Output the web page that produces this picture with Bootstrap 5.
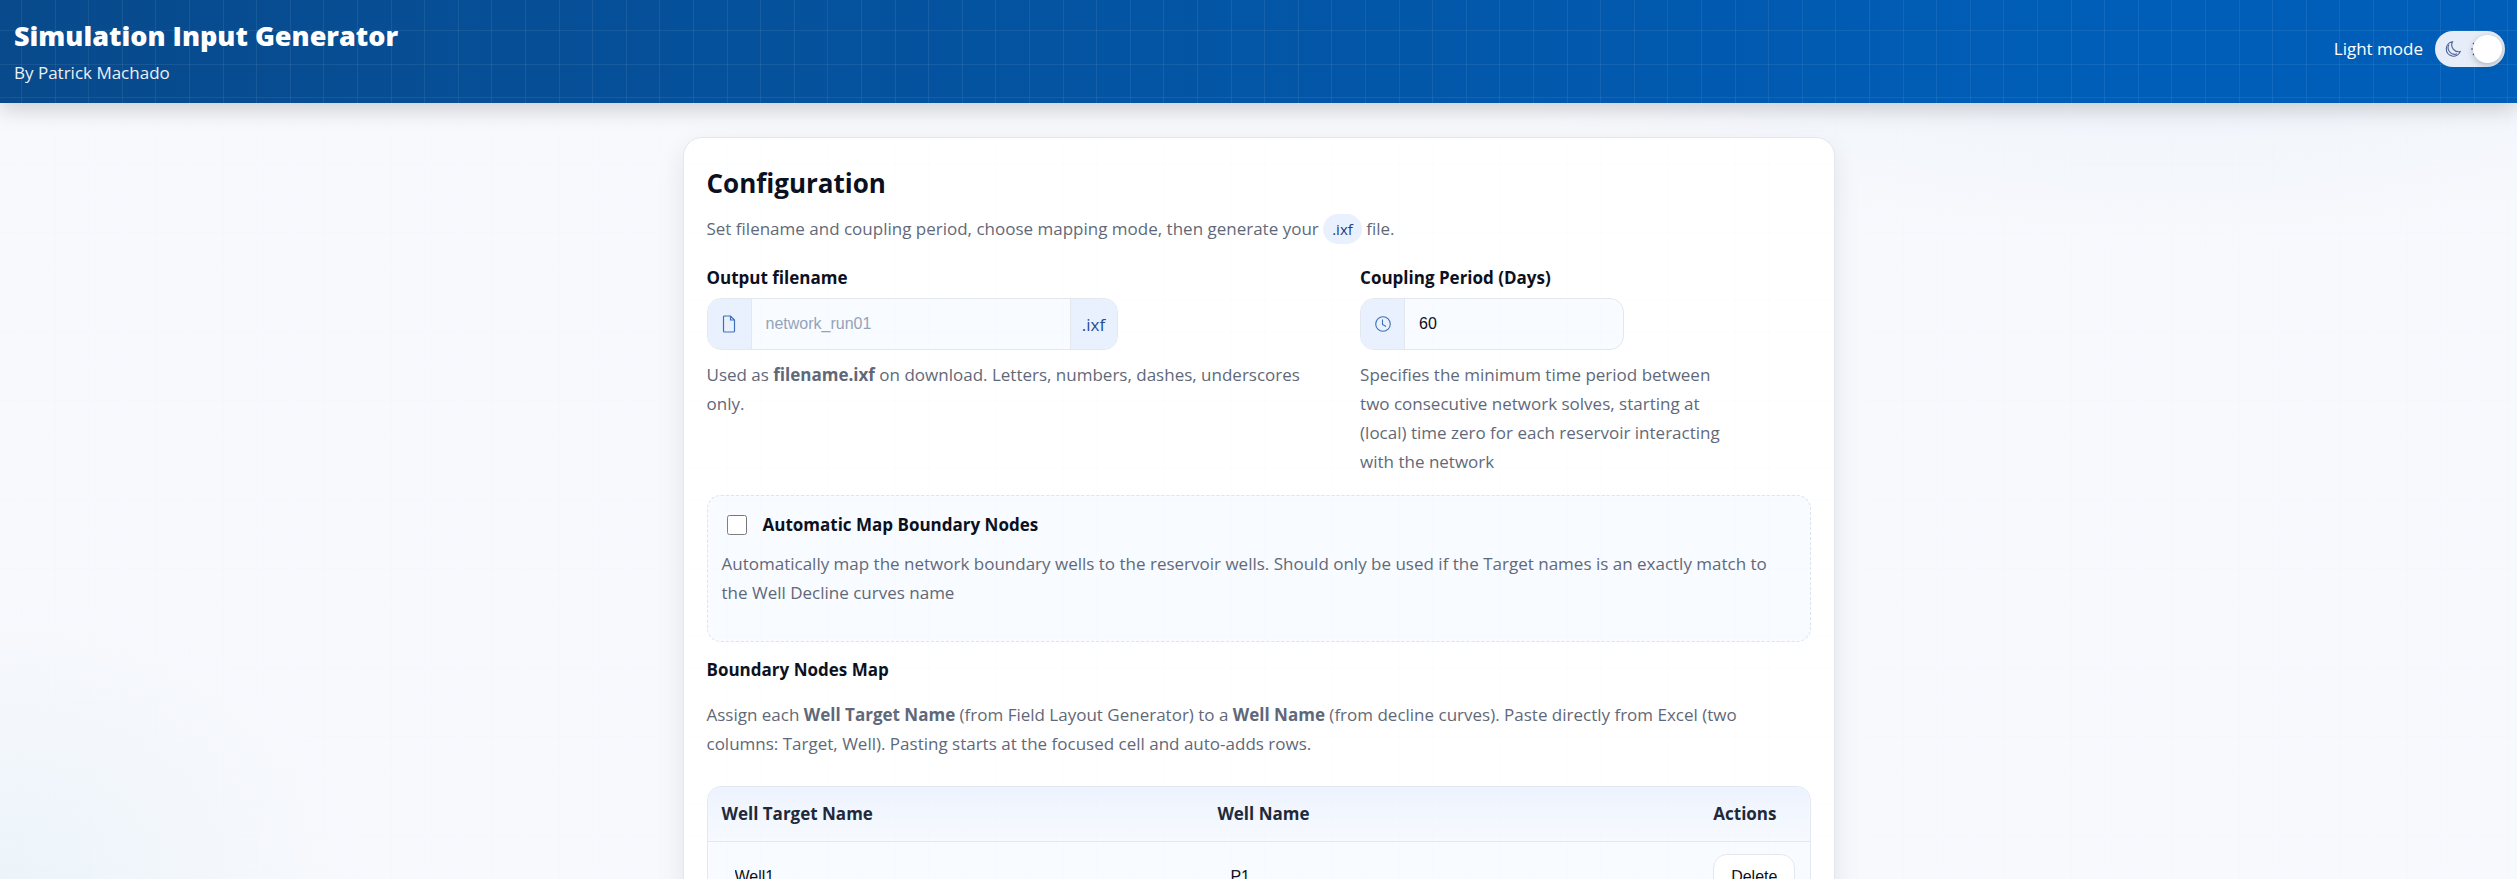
<!DOCTYPE html>
<html lang="en">
<head>
<meta charset="utf-8">
<meta name="viewport" content="width=device-width, initial-scale=1">
<title>Simulation Input Generator</title>
<link href="https://cdn.jsdelivr.net/npm/bootstrap@5.3.0/dist/css/bootstrap.min.css" rel="stylesheet">
<style>
:root{--ink:#0b1020;--muted-ink:#5f6878;--line:#e3e8f0;--tint:#e9f1ff;--soft:#f8fbff;--accent:#1f4b8f}
body{font-family:"Open Sans","Noto Sans",sans-serif;font-size:17px;line-height:29px;color:var(--ink);min-height:100vh;position:relative;
background:radial-gradient(ellipse 700px 250px at 86% 0,#ebf2f9,transparent) no-repeat fixed,radial-gradient(ellipse 360px 280px at 0 100%,#ecf4fa,transparent) no-repeat fixed,#f8f9fd}
.grid-overlay{position:absolute;inset:0;z-index:5;pointer-events:none;--g:rgba(225,236,250,.08);
background-image:linear-gradient(90deg,var(--g) 1px,transparent 1px 34px,var(--g) 34px 35px,transparent 35px 67px,var(--g) 67px 68px,transparent 68px 101px,var(--g) 101px 102px,transparent 102px 134px,var(--g) 134px 135px,transparent 135px),
linear-gradient(var(--g) 1px,transparent 1px 34px,var(--g) 34px 35px,transparent 35px 67px,var(--g) 67px 68px,transparent 68px 101px,var(--g) 101px 102px,transparent 102px 134px,var(--g) 134px 135px,transparent 135px);
background-size:168px 168px;background-position:21px 30px}
.topbar{background:linear-gradient(90deg,#084a8c,#005eb8 85%);color:#fff;padding:18px 12px 16px 14px;box-shadow:0 7px 20px rgba(0,0,0,.17)}
.topbar h1{font-size:27px;line-height:36px;font-weight:800;margin:0 0 4px}
.topbar p{opacity:.92}
.mode-area{padding-top:13px}
.mode-area label{line-height:36px}
.mode-switch{position:relative;width:70px;height:36px}
.mode-switch input{appearance:none;display:block;width:70px;height:36px;margin:0;border-radius:18px;background:#e6edf8;padding:4px}
.mode-switch input::before{content:"";display:block;width:29px;height:28px;border-radius:50%;background:#fff;box-shadow:0 2px 6px rgba(0,0,0,.25);position:relative;z-index:2}
.mode-switch input:checked::before{margin-left:34px}
.mode-switch svg{position:absolute;top:10px;z-index:1;pointer-events:none}
.mode-switch .moon{left:10px}
.mode-switch .sun{left:36px}
.panel{max-width:1152px;margin:34px auto;background:#fff;border:1px solid var(--line);border-radius:19px;padding:27px 23px 24px;box-shadow:0 10px 28px rgba(15,23,42,.09)}
.panel h2{font-size:26px;line-height:36px;font-weight:700;margin:0 0 13px}
.hint{color:var(--muted-ink);margin:0}
.intro{margin-bottom:22px}
.field-hint{margin-top:10px}
.period-hint{max-width:372px}
.pill{display:inline-block;background:var(--tint);color:#1c3f7a;border-radius:15px;padding:0 9px;font-size:15px;line-height:30px}
.fields{display:grid;grid-template-columns:629fr 450fr;gap:24px}
.field-label{display:block;font-size:17px;font-weight:700;line-height:24px}
.box-group{height:52px;border:1px solid var(--line);border-radius:14px;overflow:hidden;background:var(--soft)}
.name-group{max-width:411px}
.period-group{max-width:264px}
.box-group .addon{background:var(--tint);color:var(--accent);width:44px;display:flex;align-items:center;justify-content:center;flex:none;border-right:1px solid var(--line)}
.box-group .addon.tail{width:47px;border:0;border-left:1px solid var(--line)}
.box-group input{flex:1;min-width:0;border:0;background:none;padding:0 14px;color:var(--ink);font:16px "Liberation Sans",Arial,sans-serif}
.box-group input::placeholder{color:#94a3b8}
.auto-box{border:1px dashed #dde4ec;border-radius:14px;background:var(--soft);padding:14px 14px 34px;margin-top:19px}
.auto-row{margin-bottom:10px}
.auto-box input{width:20px;height:20px;margin:0 0 0 5px}
.map-intro{margin:18px 0 28px}
.map-frame{border:1px solid var(--line);border-radius:14px;overflow:hidden;background:var(--soft)}
.map-frame table{width:100%;table-layout:fixed}
.map-frame thead{background:linear-gradient(#edf3ff,#f7fafe)}
.map-frame th{padding:13px 14px;line-height:28px;color:#1e293b;border-bottom:1px solid var(--line)}
.map-frame td{padding:12px 14px}
.map-frame td input{width:100%;height:46px;border:0;background:none;padding:0 13px;font:16px "Liberation Sans",Arial,sans-serif;color:var(--ink)}
.map-frame td button{width:82px;height:46px;border:1px solid var(--line);border-radius:14px;background:#fff;color:var(--ink);font:16px "Liberation Sans",Arial,sans-serif}
</style>
</head>
<body>
<div class="grid-overlay"></div>
<header class="topbar d-flex justify-content-between align-items-start">
  <div>
    <h1>Simulation Input Generator</h1>
    <p class="mb-0">By Patrick Machado</p>
  </div>
  <div class="mode-area d-flex align-items-center gap-2">
    <label for="mode" class="me-1">Light mode</label>
    <div class="mode-switch">
      <input type="checkbox" role="switch" id="mode" checked>
      <svg class="moon" width="16" height="16" viewBox="0 0 16 16" fill="none" stroke="#4a6096" stroke-width="1.1"><path d="M7.500 .8A7.200 7.200 0 1 0 15.200 10.500 6.800 6.800 0 0 1 7.500.8ZM4 3.500A6.500 6.500 0 0 0 12 12.800"/></svg>
      <svg class="sun" width="16" height="16" viewBox="0 0 16 16" fill="none" stroke="#3c5488" stroke-width="1.2"><circle cx="8" cy="8" r="3.500"/><path d="M8 0v2M8 14v2M0 8h2M14 8h2M2 2l2 2M12 12l2 2M2 14l2-2M12 4l2-2"/></svg>
    </div>
  </div>
</header>
<main class="panel">
  <h2>Configuration</h2>
  <p class="hint intro">Set filename and coupling period, choose mapping mode, then generate your <span class="pill">.ixf</span> file.</p>
  <div class="fields">
    <div>
      <label class="field-label mb-2" for="fname">Output filename</label>
      <div class="box-group name-group d-flex">
        <span class="addon"><svg width="16" height="18" viewBox="0 0 16 18" fill="none" stroke="#3f6fb8" stroke-width="1.200"><path d="M3.500 1h6l4 4v11a1 1 0 0 1-1 1h-9a1 1 0 0 1-1-1V2a1 1 0 0 1 1-1ZM9.500 1v4h4"/></svg></span>
        <input id="fname" type="text" placeholder="network_run01">
        <span class="addon tail">.ixf</span>
      </div>
      <p class="hint field-hint">Used as <strong>filename.ixf</strong> on download. Letters, numbers, dashes, underscores only.</p>
    </div>
    <div>
      <label class="field-label mb-2" for="period">Coupling Period (Days)</label>
      <div class="box-group period-group d-flex">
        <span class="addon"><svg width="16" height="16" viewBox="0 0 16 16" fill="none" stroke="#3f6fb8" stroke-width="1.100"><circle cx="8" cy="8" r="7.300"/><path d="M7.500 3.500v5l3.500 2"/></svg></span>
        <input id="period" type="text" inputmode="numeric" value="60">
      </div>
      <p class="hint field-hint period-hint">Specifies the minimum time period between two consecutive network solves, starting at (local) time zero for each reservoir interacting with the network</p>
    </div>
  </div>
  <section class="auto-box">
    <div class="auto-row d-flex align-items-center gap-3">
      <input type="checkbox" id="auto">
      <label for="auto" class="fw-bold">Automatic Map Boundary Nodes</label>
    </div>
    <p class="hint">Automatically map the network boundary wells to the reservoir wells. Should only be used if the Target names is an exactly match to the Well Decline curves name</p>
  </section>
  <h3 class="field-label mt-3 mb-0" id="map-title">Boundary Nodes Map</h3>
  <p class="hint map-intro">Assign each <strong>Well Target Name</strong> (from Field Layout Generator) to a <strong>Well Name</strong> (from decline curves). Paste directly from Excel (two columns: Target, Well). Pasting starts at the focused cell and auto-adds rows.</p>
  <div class="map-frame">
    <table aria-labelledby="map-title">
      <colgroup><col style="width:45%"><col style="width:45%"><col style="width:10%"></colgroup>
      <thead><tr><th>Well Target Name</th><th>Well Name</th><th>Actions</th></tr></thead>
      <tbody><tr>
        <td><input type="text" value="Well1" aria-label="Well Target Name"></td>
        <td><input type="text" value="P1" aria-label="Well Name"></td>
        <td><button type="button">Delete</button></td>
      </tr></tbody>
    </table>
  </div>
</main>
<script src="https://cdn.jsdelivr.net/npm/bootstrap@5.3.0/dist/js/bootstrap.bundle.min.js"></script>
</body>
</html>
